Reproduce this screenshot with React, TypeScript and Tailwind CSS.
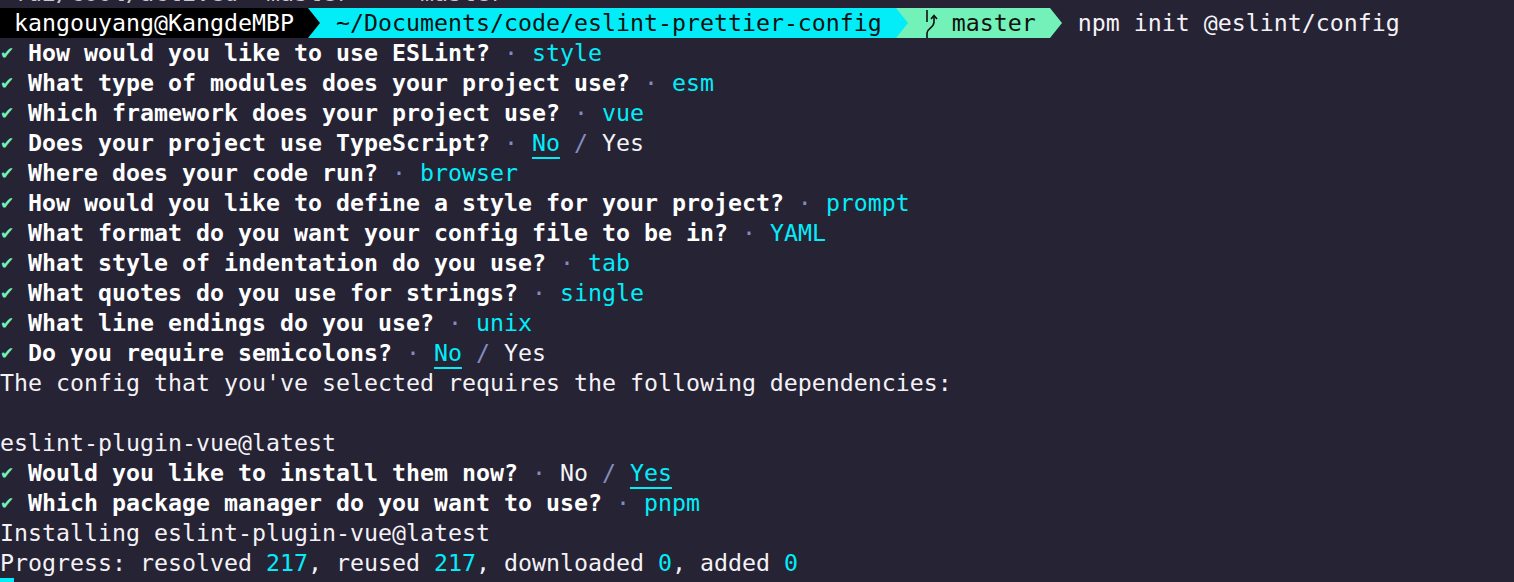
import React from 'react';

const CYAN = 'text-[#03edf9]';

type Answer = { text: string; kind?: 'choice'; picked?: 'No' | 'Yes' };

const questions: { q: string; a: Answer }[] = [
  { q: 'How would you like to use ESLint?', a: { text: 'style' } },
  { q: 'What type of modules does your project use?', a: { text: 'esm' } },
  { q: 'Which framework does your project use?', a: { text: 'vue' } },
  { q: 'Does your project use TypeScript?', a: { text: '', kind: 'choice', picked: 'No' } },
  { q: 'Where does your code run?', a: { text: 'browser' } },
  { q: 'How would you like to define a style for your project?', a: { text: 'prompt' } },
  { q: 'What format do you want your config file to be in?', a: { text: 'YAML' } },
  { q: 'What style of indentation do you use?', a: { text: 'tab' } },
  { q: 'What quotes do you use for strings?', a: { text: 'single' } },
  { q: 'What line endings do you use?', a: { text: 'unix' } },
  { q: 'Do you require semicolons?', a: { text: '', kind: 'choice', picked: 'No' } },
];

const Line = ({ children }: { children?: React.ReactNode }) => (
  <div className="flex h-[30px] items-center whitespace-pre leading-[30px]">{children}</div>
);

const Choice = ({ picked }: { picked: 'No' | 'Yes' }) => {
  const sel = 'text-[#03edf9] underline decoration-[#03edf9] decoration-2 underline-offset-[6px]';
  return (
    <>
      <span className={picked === 'No' ? sel : 'text-[#f4f2f6]'}>No</span>
      <span className="text-[#848bbd]"> / </span>
      <span className={picked === 'Yes' ? sel : 'text-[#f4f2f6]'}>Yes</span>
    </>
  );
};

const Question = ({ q, a }: { q: string; a: Answer }) => (
  <Line>
    <span
      className="inline-block w-[14px] overflow-visible text-[17px] leading-[30px] text-[#72f1b8]"
      style={{ fontFamily: '"DejaVu Sans", sans-serif' }}
    >
      ✔
    </span>
    <span> </span>
    <span className="font-bold text-[#ffffff]">{q}</span>
    <span className="text-[#848bbd]"> · </span>
    {a.kind === 'choice' ? <Choice picked={a.picked!} /> : <span className={CYAN}>{a.text}</span>}
  </Line>
);

const Arrow = ({ bg, fg }: { bg: string; fg: string }) => (
  <svg width="14" height="30" viewBox="0 0 14 30" className="block shrink-0" style={{ background: bg }}>
    <polygon points="0,0 12,15 0,30" fill={fg} />
  </svg>
);

const BranchIcon = () => (
  <svg width="14" height="30" viewBox="0 0 14 30" className="block shrink-0" fill="none" stroke="#111" strokeWidth="1.6">
    <path d="M3 2 V14" />
    <path d="M3 30 V25 C3 20 10 20 10 14 V8" />
    <path d="M7 11 L10 7.5 L13 11" />
  </svg>
);

export default function App() {
  return (
    <div
      className="h-[582px] w-[1514px] overflow-hidden bg-[#262335] text-[23.25px] text-[#f4f2f6]"
      style={{ fontFamily: '"DejaVu Sans Mono", "Liberation Mono", monospace' }}
    >
      <div className="-mt-[22px]">
        <Line>
          <span className="text-[#c9c7d2]"> fu2/cool/actived  master  ·  master</span>
        </Line>
        <div className="flex h-[30px] items-center whitespace-pre leading-[30px]">
          <span className="bg-black text-white"> kangouyang@KangdeMBP </span>
          <Arrow bg="#03edf9" fg="#000" />
          <span className="bg-[#03edf9] text-[#111]"> ~/Documents/code/eslint-prettier-config </span>
          <Arrow bg="#72f1b8" fg="#03edf9" />
          <span className="flex items-center bg-[#72f1b8] text-[#111]">
            <span> </span>
            <BranchIcon />
            <span> master </span>
          </span>
          <Arrow bg="#262335" fg="#72f1b8" />
          <span> npm init @eslint/config</span>
        </div>
        {questions.map((item) => (
          <Question key={item.q} q={item.q} a={item.a} />
        ))}
        <Line>The config that you've selected requires the following dependencies:</Line>
        <Line />
        <Line>eslint-plugin-vue@latest</Line>
        <Question q="Would you like to install them now?" a={{ text: '', kind: 'choice', picked: 'Yes' }} />
        <Question q="Which package manager do you want to use?" a={{ text: 'pnpm' }} />
        <Line>Installing eslint-plugin-vue@latest</Line>
        <Line>
          <span>Progress: resolved </span>
          <span className={CYAN}>217</span>
          <span>, reused </span>
          <span className={CYAN}>217</span>
          <span>, downloaded </span>
          <span className={CYAN}>0</span>
          <span>, added </span>
          <span className={CYAN}>0</span>
        </Line>
        <div className="h-[30px] w-[14px] bg-[#03edf9]" />
      </div>
    </div>
  );
}
